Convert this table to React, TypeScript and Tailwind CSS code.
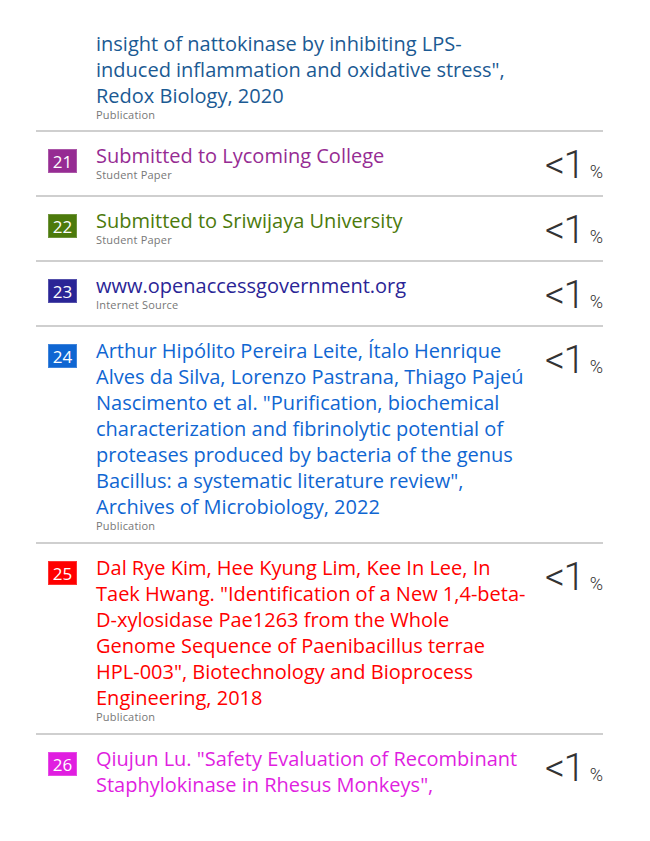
import React from "react";

type Row = {
  n?: number;
  badge?: string;
  color: string;
  title: string;
  kind: string;
};

const rows: Row[] = [
  {
    n: 21,
    badge: "bg-[#962c93]",
    color: "text-[#962c93]",
    title: "Submitted to Lycoming College",
    kind: "Student Paper",
  },
  {
    n: 22,
    badge: "bg-[#4c7a0c]",
    color: "text-[#4c7a0c]",
    title: "Submitted to Sriwijaya University",
    kind: "Student Paper",
  },
  {
    n: 23,
    badge: "bg-[#2a2596]",
    color: "text-[#2a2596]",
    title: "www.openaccessgovernment.org",
    kind: "Internet Source",
  },
  {
    n: 24,
    badge: "bg-[#0f66d2]",
    color: "text-[#0f66d2]",
    title:
      'Arthur Hipólito Pereira Leite, Ítalo Henrique Alves da Silva, Lorenzo Pastrana, Thiago Pajeú Nascimento et al. "Purification, biochemical characterization and fibrinolytic potential of proteases produced by bacteria of the genus Bacillus: a systematic literature review", Archives of Microbiology, 2022',
    kind: "Publication",
  },
  {
    n: 25,
    badge: "bg-[#ff0000]",
    color: "text-[#ff0000]",
    title:
      'Dal Rye Kim, Hee Kyung Lim, Kee In Lee, In Taek Hwang. "Identification of a New 1,4-beta-D-xylosidase Pae1263 from the Whole Genome Sequence of Paenibacillus terrae HPL-003", Biotechnology and Bioprocess Engineering, 2018',
    kind: "Publication",
  },
  {
    n: 26,
    badge: "bg-[#e01ee0]",
    color: "text-[#e01ee0]",
    title: 'Qiujun Lu. "Safety Evaluation of Recombinant Staphylokinase in Rhesus Monkeys",',
    kind: "",
  },
];

function RowView({ r }: { r: Row }) {
  return (
    <div className="flex border-t-2 border-[#cfcfcf] pt-[11px] pb-[10px]">
      <div className="w-[60px] shrink-0 pl-[12px] pt-[6px]">
        <div
          className={`${r.badge} w-[29px] h-[24px] flex items-center justify-center text-white text-[17px] leading-none border border-white/20`}
        >
          {r.n}
        </div>
      </div>
      <div className="w-[436px] shrink-0">
        <div className={`${r.color} text-[20px] leading-[26px]`}>{r.title}</div>
        {r.kind && (
          <div className="text-[11px] leading-[12px] text-[#777] tracking-[0.2px]">{r.kind}</div>
        )}
      </div>
      <div
        className="flex-1 flex justify-end items-baseline pt-[3px] text-[#333]"
        style={{ fontFamily: "Roboto, sans-serif" }}
      >
        <span className="text-[39px] leading-[39px] font-light tracking-[-1.5px]">&lt;1</span>
        <span className="text-[18px] leading-[18px] ml-[6px] font-light">%</span>
      </div>
    </div>
  );
}

export default function App() {
  return (
    <div
      className="bg-white w-[650px] h-[841px] overflow-hidden"
      style={{ fontFamily: '"Open Sans", sans-serif' }}
    >
      <div className="ml-[36px] w-[567px] pt-[31px]">
        <div className="pl-[60px] pb-[9px]">
          <div className="text-[#1b5a93] text-[20px] leading-[26px] w-[436px]">
            insight of nattokinase by inhibiting LPS-induced inflammation and oxidative stress", Redox Biology, 2020
          </div>
          <div className="text-[11px] leading-[12px] text-[#777] tracking-[0.2px]">Publication</div>
        </div>
        {rows.map((r) => (
          <RowView key={r.n} r={r} />
        ))}
      </div>
    </div>
  );
}
